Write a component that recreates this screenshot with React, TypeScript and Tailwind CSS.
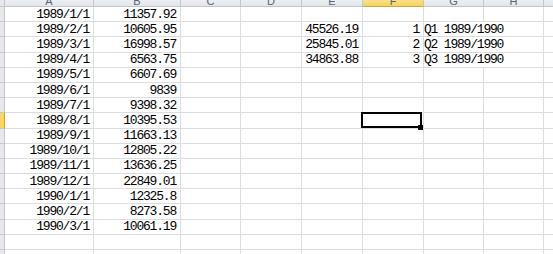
import React from "react";

const letters = ["A", "B", "C", "D", "E", "F", "G", "H", "I"];
const colW = [
  "w-[89px]",
  "w-[87px]",
  "w-[60px]",
  "w-[61px]",
  "w-[61px]",
  "w-[61px]",
  "w-[60px]",
  "w-[60px]",
  "w-[60px]",
];

const aVals = [
  "1989/1/1",
  "1989/2/1",
  "1989/3/1",
  "1989/4/1",
  "1989/5/1",
  "1989/6/1",
  "1989/7/1",
  "1989/8/1",
  "1989/9/1",
  "1989/10/1",
  "1989/11/1",
  "1989/12/1",
  "1990/1/1",
  "1990/2/1",
  "1990/3/1",
];
const bVals = [
  "11357.92",
  "10605.95",
  "16998.57",
  "6563.75",
  "6607.69",
  "9839",
  "9398.32",
  "10395.53",
  "11663.13",
  "12805.22",
  "13636.25",
  "22849.01",
  "12325.8",
  "8273.58",
  "10061.19",
];

const extra: Record<number, { e: string; f: string; g: string }> = {
  1: { e: "45526.19", f: "1", g: "Q1 1989/1990" },
  2: { e: "25845.01", f: "2", g: "Q2 1989/1990" },
  3: { e: "34863.88", f: "3", g: "Q3 1989/1990" },
};

const SEL_ROW = 7;
const SEL_COL = 5;

export default function App() {
  const rows = Array.from({ length: 17 }, (_, i) => i);
  return (
    <div
      className="w-[553px] h-[254px] overflow-hidden bg-white text-black"
      style={{ fontFamily: '"Liberation Mono", "Noto Sans CJK SC", monospace' }}
    >
      {/* column header (scrolled so only its lower edge shows) */}
      <div className="flex h-[7px]">
        <div className="w-[5px] shrink-0 bg-[#e6e8ec] border-r border-b border-[#c3c7cd]" />
        {letters.map((l, ci) => (
          <div
            key={l}
            className={`${colW[ci]} shrink-0 overflow-hidden flex items-end justify-center border-r border-b border-[#c3c7cd] ${
              ci === SEL_COL
                ? "bg-gradient-to-b from-[#fbe08a] to-[#f7d25c] border-b-[#c9a94a]"
                : "bg-gradient-to-b from-[#eceef1] to-[#e2e5ea]"
            }`}
          >
            <span
              className="text-[11px] leading-[11px] text-[#5a6170] translate-y-[1px]"
              style={{ fontFamily: '"Liberation Sans", sans-serif' }}
            >
              {l}
            </span>
          </div>
        ))}
      </div>
      {rows.map((r) => {
        const ex = extra[r];
        return (
          <div key={r} className="flex h-[15.2px]">
            <div
              className={`w-[5px] shrink-0 border-r border-b border-[#c3c7cd] ${
                r === SEL_ROW ? "bg-[#f8d565] border-r-[#c9a94a]" : "bg-[#e6e8ec]"
              }`}
            />
            {letters.map((l, ci) => {
              let content: string | null = null;
              let align = "justify-end pr-[4px]";
              let overflowNoBorder = false;
              if (ci === 0) content = aVals[r] ?? null;
              if (ci === 1) content = bVals[r] ?? null;
              if (ex) {
                if (ci === 4) content = ex.e;
                if (ci === 5) content = ex.f;
                if (ci === 6) {
                  content = ex.g;
                  align = "justify-start pl-0";
                  overflowNoBorder = true;
                }
              }
              const isSel = r === SEL_ROW && ci === SEL_COL;
              return (
                <div
                  key={l}
                  className={`${colW[ci]} shrink-0 relative flex items-center ${align} border-b border-r border-[#dcdddf] ${
                    overflowNoBorder ? "border-r-white" : ""
                  } text-[13px] leading-none tracking-[-1.2px] whitespace-nowrap`}
                >
                  {content !== null && <span className={overflowNoBorder ? "relative z-10" : ""}>{content}</span>}
                  {isSel && (
                    <>
                      <div className="absolute -left-[2px] -top-[1px] right-[1px] bottom-0 border-2 border-black z-20" />
                      <div className="absolute right-0 -bottom-[2px] w-[5px] h-[5px] bg-black z-30" />
                    </>
                  )}
                </div>
              );
            })}
          </div>
        );
      })}
    </div>
  );
}
